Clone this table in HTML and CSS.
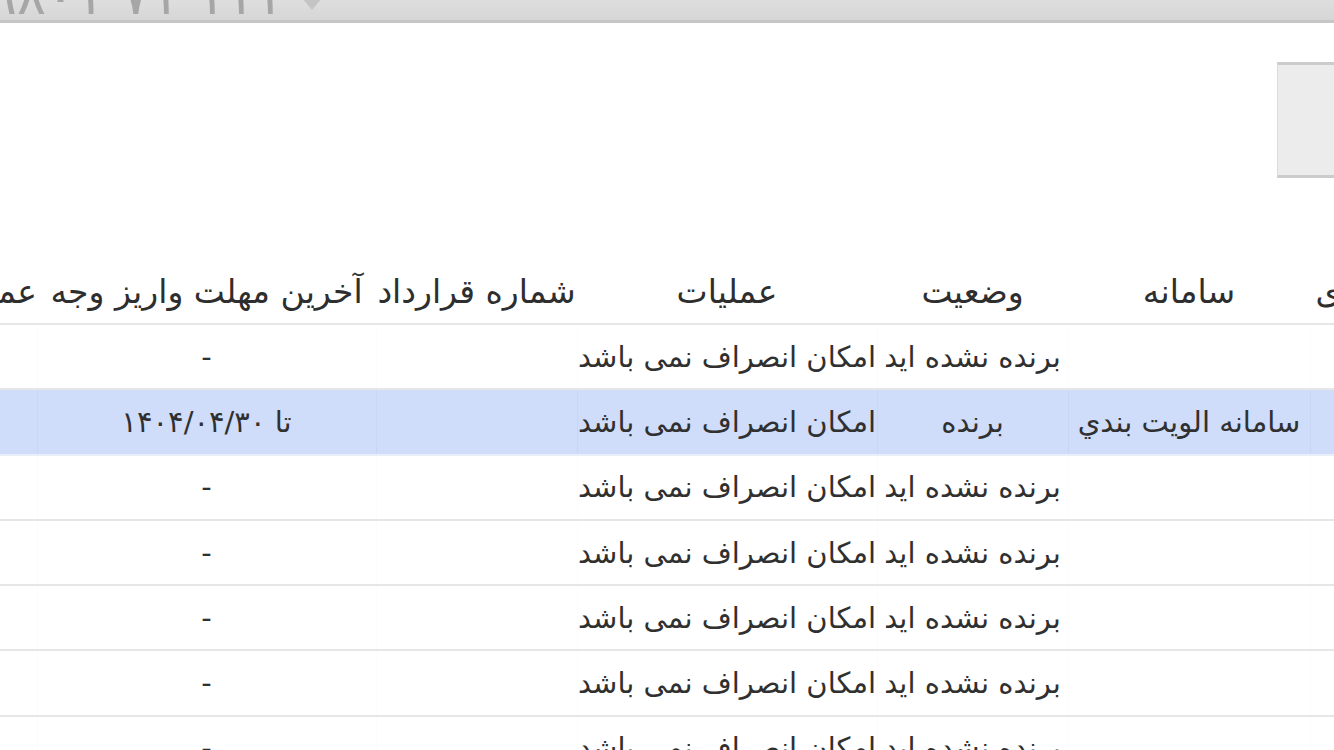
FILE: index.html
```html
<!DOCTYPE html>
<html lang="fa">
<head>
<meta charset="utf-8">
<title>لیست درخواست ها</title>
<link rel="stylesheet" href="styles.css">
</head>
<body>
<div class="topbar">
  <div class="phone">
    <span class="digits">۰۹۸۰۱&nbsp;۷۱&nbsp;۱۱۱</span>
    <svg class="caret" width="22" height="14" viewBox="0 0 22 14"><path d="M1 0 L21 0 L11 12 Z" fill="#c4c4c4"/></svg>
  </div>
</div>
<div class="toolbar">
  <div class="filter-box"></div>
</div>
<div class="table-wrap">
  <table class="grid">
    <colgroup>
      <col class="c-a"><col class="c-b"><col class="c-c"><col class="c-d"><col class="c-e"><col class="c-f"><col class="c-g">
    </colgroup>
    <thead>
      <tr>
        <th>کد رهگیری</th>
        <th>سامانه</th>
        <th>وضعیت</th>
        <th>عملیات</th>
        <th>شماره قرارداد</th>
        <th>آخرین مهلت واریز وجه</th>
        <th class="start">عملکرد</th>
      </tr>
    </thead>
    <tbody>
      <tr><td></td><td></td><td>برنده نشده اید</td><td>امکان انصراف نمی باشد</td><td></td><td>-</td><td></td></tr>
      <tr class="selected"><td></td><td>سامانه الويت بندي</td><td>برنده</td><td>امکان انصراف نمی باشد</td><td></td><td>تا ۱۴۰۴/۰۴/۳۰</td><td></td></tr>
      <tr><td></td><td></td><td>برنده نشده اید</td><td>امکان انصراف نمی باشد</td><td></td><td>-</td><td></td></tr>
      <tr><td></td><td></td><td>برنده نشده اید</td><td>امکان انصراف نمی باشد</td><td></td><td>-</td><td></td></tr>
      <tr><td></td><td></td><td>برنده نشده اید</td><td>امکان انصراف نمی باشد</td><td></td><td>-</td><td></td></tr>
      <tr><td></td><td></td><td>برنده نشده اید</td><td>امکان انصراف نمی باشد</td><td></td><td>-</td><td></td></tr>
      <tr><td></td><td></td><td>برنده نشده اید</td><td>امکان انصراف نمی باشد</td><td></td><td>-</td><td></td></tr>
    </tbody>
  </table>
</div>
</body>
</html>
```
FILE: styles.css
```css
html, body {
  margin: 0;
  padding: 0;
  background: #ffffff;
  overflow: hidden;
  width: 1334px;
  height: 750px;
  font-family: "DejaVu Sans", sans-serif;
  color: #2b2b2b;
}

.topbar {
  height: 20px;
  background: linear-gradient(#dedede, #d6d6d6);
  border-bottom: 3px solid #c6c6c6;
  overflow: hidden;
  direction: ltr;
}

.phone {
  display: flex;
  align-items: flex-start;
  gap: 18px;
  margin-top: -31px;
  margin-left: -41px;
  height: 54px;
}

.digits {
  font-size: 54px;
  line-height: 54px;
  color: #a6a6a6;
  display: block;
  height: 54px;
}

.caret {
  margin-top: 29px;
}

.toolbar {
  direction: rtl;
  display: flex;
  margin-top: 39px;
  margin-right: -10px;
}

.filter-box {
  width: 65px;
  height: 110px;
  background: #ececec;
  border-top: 3px solid #cccccc;
  border-bottom: 3px solid #cccccc;
  border-right: 1px solid #dcdcdc;
  border-left: 1px solid #dcdcdc;
}

.table-wrap {
  direction: rtl;
  margin-top: 81px;
}

.grid {
  table-layout: fixed;
  border-collapse: collapse;
  width: 1563px;
  margin-right: -136px;
  font-size: 29px;
}

.c-a { width: 160px; }
.c-b { width: 242px; }
.c-c { width: 191px; }
.c-d { width: 300px; }
.c-e { width: 201px; }
.c-f { width: 339px; }
.c-g { width: 130px; }

.grid th,
.grid td {
  height: 63.3px;
  padding: 0;
  text-align: center;
  white-space: nowrap;
  overflow: visible;
  border-bottom: 2px solid #e6e6e6;
  vertical-align: middle;
}

.grid th {
  height: 64px;
  font-weight: normal;
  font-size: 33px;
  color: #2e2e2e;
}

.grid th.start {
  text-align: right;
}

.grid td {
  color: #303030;
  border-left: 1px solid #fcfcfc;
}

.grid tr.selected td {
  background: #cfdcfa;
  border-left: 1px solid #c9d6f3;
  border-bottom-color: #e9eef8;
}
```
